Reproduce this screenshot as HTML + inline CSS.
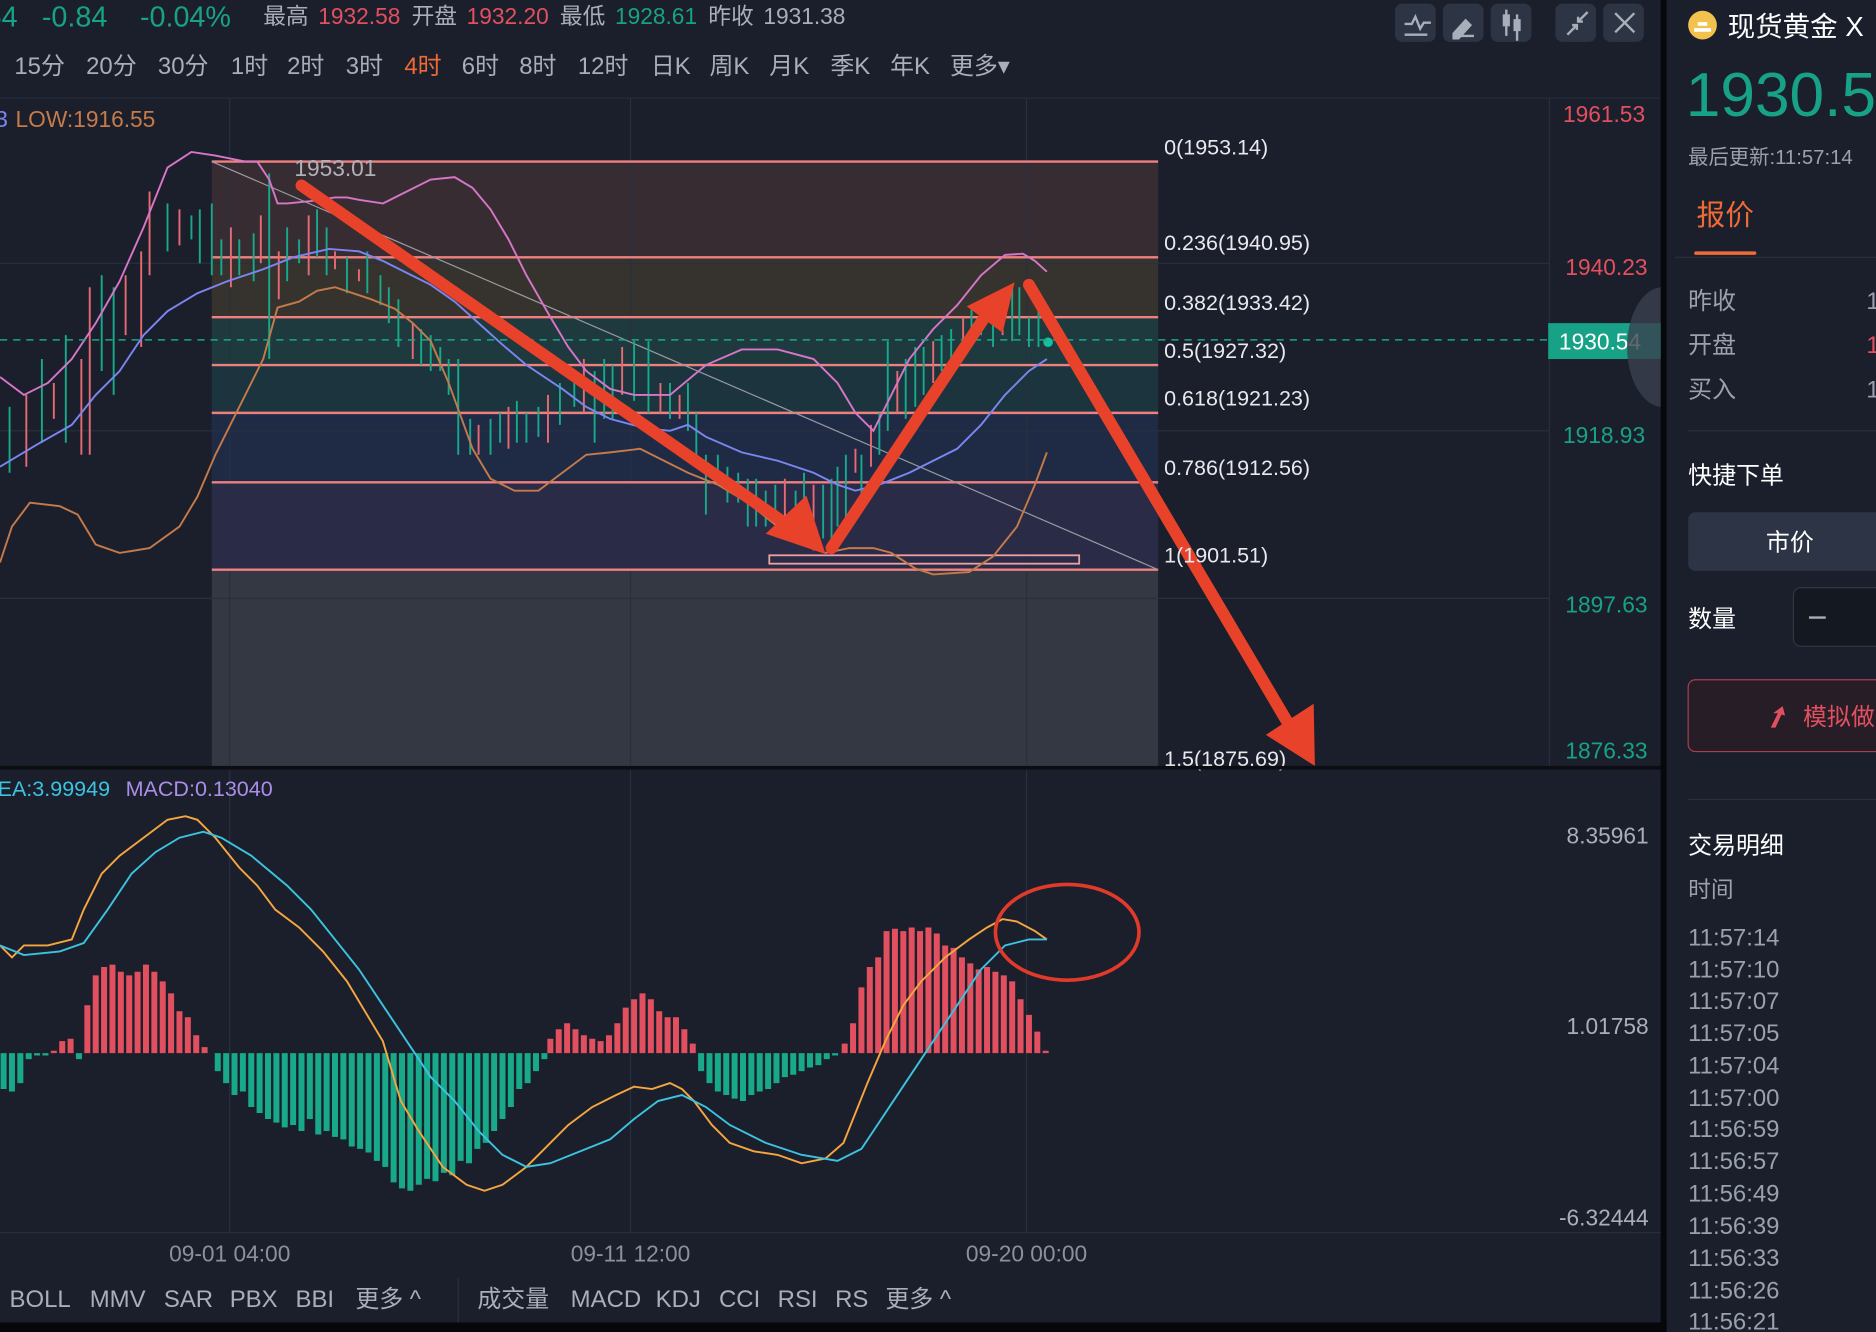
<!DOCTYPE html>
<html><head><meta charset="utf-8"><style>
html,body{margin:0;padding:0;background:#1b1f2b;overflow:hidden}
svg{display:block}
text{font-family:"Liberation Sans","Noto Sans CJK SC",sans-serif}
</style></head><body>
<svg width="1876" height="1332" viewBox="0 0 1568 1113" preserveAspectRatio="none" xmlns="http://www.w3.org/2000/svg">
<rect width="1568" height="1113" fill="#1b1f2b"/>
<!-- right panel -->
<rect x="1388" y="0" width="5" height="1113" fill="#07080b"/>
<rect x="1393" y="0" width="175" height="1113" fill="#1a1f2b"/>
<!-- bottom black -->
<rect x="0" y="1105" width="1393" height="8" fill="#06070a"/>
<!-- top rows -->
<g font-size="24" fill="#17a287"><text x="-12" y="22">54</text><text x="35" y="22">-0.84</text><text x="117" y="22">-0.04%</text></g>
<g font-size="19"><text x="220" y="20" fill="#a9aebb">最高</text><text x="266" y="20" fill="#e2505f">1932.58</text>
<text x="344" y="20" fill="#a9aebb">开盘</text><text x="390" y="20" fill="#e2505f">1932.20</text>
<text x="468" y="20" fill="#a9aebb">最低</text><text x="514" y="20" fill="#17a287">1928.61</text>
<text x="592" y="20" fill="#a9aebb">昨收</text><text x="638" y="20" fill="#a9aebb">1931.38</text></g>
<g font-size="20" fill="#a9aebb"><text x="12" y="62">15分</text><text x="72" y="62">20分</text><text x="132" y="62">30分</text><text x="193" y="62">1时</text><text x="240" y="62">2时</text><text x="289" y="62">3时</text><text x="338" y="62" fill="#f06a35">4时</text><text x="386" y="62">6时</text><text x="434" y="62">8时</text><text x="483" y="62">12时</text><text x="544" y="62">日K</text><text x="593" y="62">周K</text><text x="643" y="62">月K</text><text x="694" y="62">季K</text><text x="744" y="62">年K</text><text x="794" y="62">更多▾</text></g>
<!-- top icons -->
<g fill="#2d3444"><rect x="1166" y="3" width="34" height="32" rx="6"/><rect x="1206" y="3" width="34" height="32" rx="6"/><rect x="1246" y="3" width="34" height="32" rx="6"/><rect x="1300" y="3" width="34" height="32" rx="6"/><rect x="1340" y="3" width="34" height="32" rx="6"/></g>
<g stroke="#a9aebb" stroke-width="2" fill="none">
<path d="M1174 20h6l3-6 4 10 3-5h6M1174 29h19"/>
<path d="M1215 28l10-11 4 4-10 11h-4zM1215 30h17" fill="#a9aebb"/>
<path d="M1259 8v22M1268 12v22"/>
<path d="M1310 29l8-8M1314 21h4v4M1327 10l-8 8M1319 14v4h4"/>
<path d="M1350 11l16 16M1366 11l-16 16"/></g>
<g fill="#a9aebb"><rect x="1256" y="12" width="6" height="10"/><rect x="1265" y="16" width="6" height="10"/></g>
<line x1="0" y1="82" x2="1388" y2="82" stroke="#262b38"/>
<!-- fib bands -->
<rect x="177" y="135" width="791" height="80" fill="#382c33"/>
<rect x="177" y="215" width="791" height="50" fill="#36332f"/>
<rect x="177" y="265" width="791" height="40" fill="#1f3a3e"/>
<rect x="177" y="305" width="791" height="40" fill="#1b343e"/>
<rect x="177" y="345" width="791" height="58" fill="#1f2b45"/>
<rect x="177" y="403" width="791" height="73" fill="#292b47"/>
<rect x="177" y="476" width="791" height="165" fill="#343843"/>
<!-- grid -->
<g stroke="#283040" stroke-width="1"><path d="M192 82V1030M527 82V1030M858 82V1030M0 220H1295M0 360H1295M0 500H1295M0 1030H1388"/></g>
<line x1="1295" y1="82" x2="1295" y2="641" stroke="#283040"/>
<g stroke="#f08080" stroke-width="2"><path d="M177 135H968M177 215H968M177 265H968M177 305H968M177 345H968M177 403H968M177 476H968"/></g>
<line x1="177" y1="135" x2="968" y2="476" stroke="#9a9aa0" stroke-width="1"/>
<rect x="643" y="464" width="259" height="7" fill="none" stroke="#f0a0a0" stroke-width="1.5"/>
<!-- candles -->
<g stroke-width="1.6">
<path stroke="#17a98a" d="M8 340V395M35 300V370M55 280V370M85 230V310M95 240V330M140 170V210M160 180V200M167 175V220M177 170V230M185 200V230M200 200V230M212 195V235M225 145V300M240 190V235M250 200V220M265 175V215M273 190V230M290 215V245M307 210V245M318 230V255M325 240V270M333 250V290M352 275V305M360 280V310M368 290V310M375 300V330M383 300V380M393 350V380M410 350V380M418 345V370M432 335V370M440 345V370M450 340V365M468 320V355M480 310V340M497 310V370M505 300V350M512 305V350M530 285V335M542 285V345M560 320V350M575 320V360M582 345V380M590 380V430M600 380V400M608 390V420M617 395V420M625 400V440M632 400V440M640 410V440M648 405V445M665 410V445M672 395V440M688 405V450M695 400V460M700 390V440M707 380V440M720 380V420M735 345V380M742 285V360M757 300V350M765 290V340M772 290V330M787 280V310M795 275V305M812 255V285M820 255V280M830 260V290M846 240V285M852 240V280M860 265V290M868 255V290"/>
<path stroke="#e56a72" d="M22 330V390M45 320V350M68 300V380M75 240V380M105 230V280M118 210V290M125 160V230M150 175V205M193 190V240M218 180V220M233 210V250M258 180V230M280 210V225M300 225V235M345 270V300M400 355V380M425 340V375M458 330V370M488 300V345M520 290V330M552 320V345M568 330V350M656 400V440M680 405V460M715 375V395M728 355V390M750 310V345M780 285V320M805 265V295M838 250V280"/>
</g>
<circle cx="876" cy="286" r="4" fill="#17c09a"/>
<!-- bollinger -->
<g fill="none" stroke-width="1.6">
<polyline stroke="#d776c8" points="0,315 20,330 40,320 60,300 80,270 100,235 120,190 140,140 160,127 180,130 205,135 215,135 225,150 232,170 240,170 260,168 280,165 290,165 300,167 320,170 340,160 360,150 380,148 395,157 410,175 425,200 440,230 460,265 475,290 490,310 510,325 530,330 560,330 590,305 620,292 650,292 680,300 700,320 715,345 730,360 745,330 760,300 780,275 800,255 820,230 840,213 855,212 865,218 875,227"/>
<polyline stroke="#7b86f0" points="0,390 30,372 60,355 80,330 100,310 120,280 140,260 165,245 190,235 220,225 245,215 275,208 300,210 320,218 340,228 360,238 380,252 400,270 420,288 440,305 470,325 490,340 510,350 540,358 560,360 575,355 590,365 620,378 650,385 680,395 700,405 715,410 735,405 760,395 780,385 800,375 820,355 840,330 860,310 875,300"/>
<polyline stroke="#c47a4a" points="0,470 10,440 25,420 50,423 65,430 80,455 100,462 125,458 150,440 165,415 180,380 200,340 220,300 232,257 250,252 265,243 280,240 295,245 310,250 330,258 345,270 360,285 375,320 395,375 410,400 430,410 450,410 470,395 490,380 510,378 535,375 555,385 575,395 600,405 625,420 650,440 670,455 690,462 710,458 730,458 745,462 765,475 780,480 810,478 830,465 850,440 865,405 875,378"/>
</g>
<line x1="0" y1="284" x2="1295" y2="284" stroke="#17a98a" stroke-width="1.2" stroke-dasharray="6,5"/>
<!-- arrows -->
<g fill="#e8432a" stroke="#e8432a" stroke-linecap="round">
<line x1="252" y1="155" x2="660" y2="440" stroke-width="10"/>
<polygon points="690,463 640,446 674,414" stroke="none"/>
<line x1="695" y1="458" x2="825" y2="262" stroke-width="10"/>
<polygon points="848,236 808,256 838,278" stroke="none"/>
<line x1="860" y1="238" x2="1080" y2="610" stroke-width="10"/>
<polygon points="1099,640 1058,614 1098,588" stroke="none"/>
</g>
<!-- labels -->
<text x="246" y="147" font-size="19" fill="#b0b0b8">1953.01</text>
<text x="-4" y="106" font-size="19" fill="#7b86f0">3</text>
<text x="13" y="106" font-size="19" fill="#c47a4a">LOW:1916.55</text>
<g font-size="18" fill="#e8e8ee"><text x="973" y="129">0(1953.14)</text><text x="973" y="209">0.236(1940.95)</text><text x="973" y="259">0.382(1933.42)</text><text x="973" y="299">0.5(1927.32)</text><text x="973" y="339">0.618(1921.23)</text><text x="973" y="397">0.786(1912.56)</text><text x="973" y="470">1(1901.51)</text><text x="973" y="640">1.5(1875.69)</text></g>
<g font-size="19" text-anchor="end"><text x="1375" y="102" fill="#e2505f">1961.53</text><text x="1377" y="230" fill="#e2505f">1940.23</text><text x="1375" y="370" fill="#17a287">1918.93</text><text x="1377" y="512" fill="#17a287">1897.63</text><text x="1377" y="634" fill="#17a287">1876.33</text></g>
<rect x="1294" y="270" width="94" height="30" fill="#17a287"/>
<text x="1303" y="292" font-size="19" fill="#fff">1930.54</text>
<path d="M1388 240 A30 50 0 0 0 1360 290 A30 50 0 0 0 1388 340Z" fill="#3a404d" opacity="0.8"/>
<!-- separator -->
<rect x="0" y="640" width="1388" height="3" fill="#0b0d12"/>
<!-- MACD -->
<text x="-2" y="665" font-size="18" fill="#3cc3e0">EA:3.99949</text>
<text x="105" y="665" font-size="18" fill="#a98ee8">MACD:0.13040</text>
<g font-size="19" fill="#a9aebb" text-anchor="end"><text x="1378" y="705">8.35961</text><text x="1378" y="864">1.01758</text><text x="1378" y="1024">-6.32444</text></g>
<path stroke="#17a98a" stroke-width="5" d="M3 880V910M10 880V912M17 880V905M24 880V885M31 880V882M38 880V882M66 880V885M182 880V895M189 880V905M196 880V915M203 880V912M210 880V925M217 880V930M224 880V935M231 880V938M238 880V942M245 880V940M252 880V945M259 880V935M266 880V948M273 880V945M280 880V950M287 880V952M294 880V958M301 880V960M308 880V963M315 880V970M322 880V975M329 880V988M336 880V993M343 880V995M350 880V990M357 880V985M364 880V987M371 880V980M378 880V982M385 880V970M392 880V972M399 880V960M406 880V955M413 880V945M420 880V935M427 880V925M434 880V910M441 880V905M448 880V895M455 880V885M586 880V895M593 880V905M600 880V912M607 880V915M614 880V918M621 880V920M628 880V915M635 880V912M642 880V910M649 880V905M656 880V900M663 880V898M670 880V895M677 880V892M684 880V890M691 880V885M698 880V882"/>
<path stroke="#e2505f" stroke-width="5" d="M45 880V878M52 880V870M59 880V868M73 880V840M80 880V815M87 880V808M94 880V806M101 880V812M108 880V815M115 880V812M122 880V806M129 880V812M136 880V820M143 880V830M150 880V845M157 880V850M164 880V865M171 880V875M460 880V868M467 880V860M474 880V855M481 880V860M488 880V865M495 880V868M502 880V870M509 880V865M516 880V855M523 880V842M530 880V835M537 880V830M544 880V835M551 880V845M558 880V850M565 880V850M572 880V860M579 880V872M706 880V872M713 880V855M720 880V825M727 880V808M734 880V800M741 880V778M748 880V776M755 880V778M762 880V775M769 880V778M776 880V775M783 880V780M790 880V790M797 880V792M804 880V800M811 880V805M818 880V810M825 880V808M832 880V812M839 880V815M846 880V820M853 880V835M860 880V848M867 880V862M874 880V878"/>
<g fill="none" stroke-width="1.6">
<polyline stroke="#f5a640" points="0,790 10,800 20,790 40,790 60,785 70,760 85,730 100,715 120,700 140,685 155,682 165,685 180,700 200,725 215,740 230,760 250,775 270,795 290,820 305,845 320,870 335,920 350,945 370,975 390,990 405,995 420,990 440,975 455,960 475,940 495,925 515,915 530,908 545,910 560,905 570,910 580,920 595,940 610,955 630,962 650,965 670,972 690,968 705,955 715,930 725,905 740,870 755,840 770,820 790,800 810,785 825,775 838,768 850,770 865,778 875,785"/>
<polyline stroke="#3cc3e0" points="0,790 20,798 50,795 70,788 90,760 110,730 130,712 150,700 170,695 185,700 210,715 240,740 260,760 280,785 300,810 320,840 340,870 360,900 380,920 400,945 420,965 440,975 460,972 490,960 510,952 530,935 550,920 570,915 590,925 610,940 640,955 670,965 700,970 720,960 740,930 760,900 780,870 800,840 820,810 840,790 860,785 875,785"/>
</g>
<ellipse cx="892" cy="779" rx="60" ry="40" fill="none" stroke="#e23a2a" stroke-width="3"/>
<!-- time axis -->
<g font-size="19" fill="#8a909e" text-anchor="middle"><text x="192" y="1054">09-01 04:00</text><text x="527" y="1054">09-11 12:00</text><text x="858" y="1054">09-20 00:00</text></g>
<line x1="383" y1="1068" x2="383" y2="1105" stroke="#2a303c"/>
<g font-size="20" fill="#a9aebb"><text x="8" y="1092">BOLL</text><text x="75" y="1092">MMV</text><text x="137" y="1092">SAR</text><text x="192" y="1092">PBX</text><text x="247" y="1092">BBI</text><text x="297" y="1092">更多 ^</text><text x="399" y="1092">成交量</text><text x="477" y="1092">MACD</text><text x="548" y="1092">KDJ</text><text x="601" y="1092">CCI</text><text x="650" y="1092">RSI</text><text x="698" y="1092">RS</text><text x="740" y="1092">更多 ^</text></g>
<!-- right panel content -->
<circle cx="1423" cy="21" r="12" fill="#f2c14e"/>
<path d="M1416 25h14M1419 20h8" stroke="#fff" stroke-width="3"/>
<text x="1444" y="30" font-size="23" fill="#ffffff">现货黄金 X</text>
<text x="1409" y="97" font-size="52" fill="#17a287">1930.54</text>
<text x="1411" y="137" font-size="17" fill="#9aa0ad">最后更新:11:57:14</text>
<text x="1418" y="188" font-size="24" fill="#f06a35">报价</text>
<rect x="1416" y="210" width="52" height="3" rx="1.5" fill="#f06a35"/>
<line x1="1400" y1="215" x2="1568" y2="215" stroke="#2a303c"/>
<g font-size="20" fill="#9aa0ad"><text x="1411" y="258">昨收</text><text x="1411" y="295">开盘</text><text x="1411" y="332">买入</text><text x="1560" y="258">1</text><text x="1560" y="295" fill="#e2505f">1</text><text x="1560" y="332">1</text></g>
<line x1="1411" y1="360" x2="1568" y2="360" stroke="#2a303c"/>
<text x="1411" y="404" font-size="20" fill="#ffffff">快捷下单</text>
<rect x="1411" y="428" width="170" height="49" rx="6" fill="#2c3445"/>
<text x="1496" y="460" font-size="20" fill="#ffffff" text-anchor="middle">市价</text>
<text x="1411" y="524" font-size="20" fill="#ffffff">数量</text>
<rect x="1499" y="491" width="80" height="49" rx="6" fill="#141821" stroke="#303644"/>
<line x1="1512" y1="516" x2="1526" y2="516" stroke="#a9aebb" stroke-width="2"/>
<rect x="1411" y="568" width="170" height="60" rx="6" fill="#261d26" stroke="#a8404a"/>
<path d="M1480 608l6-12-4 0 8-6 2 8-3-1-5 11z" fill="#e2505f"/>
<text x="1507" y="606" font-size="20" fill="#e2505f">模拟做</text>
<line x1="1411" y1="668" x2="1568" y2="668" stroke="#2a303c"/>
<text x="1411" y="713" font-size="20" fill="#ffffff">交易明细</text>
<text x="1411" y="750" font-size="19" fill="#9aa0ad">时间</text>
<g font-size="20" fill="#9aa0ad"><text x="1411" y="790">11:57:14</text><text x="1411" y="817">11:57:10</text><text x="1411" y="843">11:57:07</text><text x="1411" y="870">11:57:05</text><text x="1411" y="897">11:57:04</text><text x="1411" y="924">11:57:00</text><text x="1411" y="950">11:56:59</text><text x="1411" y="977">11:56:57</text><text x="1411" y="1004">11:56:49</text><text x="1411" y="1031">11:56:39</text><text x="1411" y="1058">11:56:33</text><text x="1411" y="1085">11:56:26</text><text x="1411" y="1111">11:56:21</text></g>
</svg>
</body></html>
